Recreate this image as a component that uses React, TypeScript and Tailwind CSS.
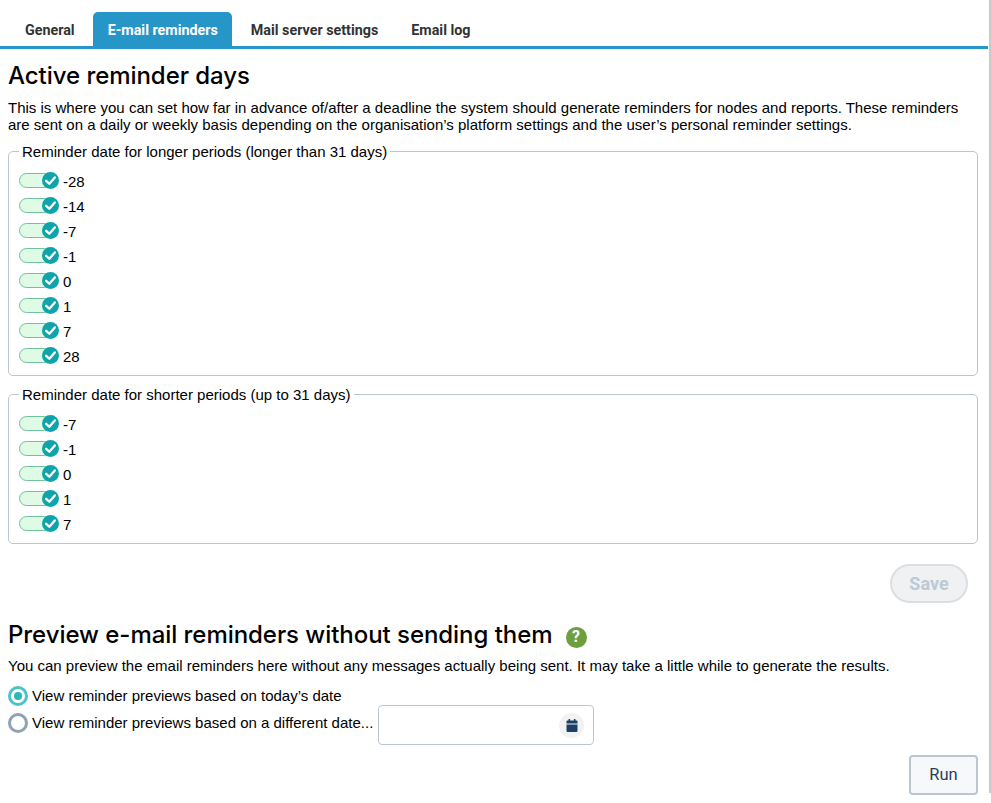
import React from 'react';

const longDays = [-28, -14, -7, -1, 0, 1, 7, 28];
const shortDays = [-7, -1, 0, 1, 7];
const tabs = ['General', 'E-mail reminders', 'Mail server settings', 'Email log'];

const ReminderToggle: React.FC<{ day: number }> = ({ day }) => (
  <div className="flex h-[25px] items-center">
    <span className="relative block h-[15px] w-[33px] -translate-y-[2px] rounded-full border border-[#6fc29c] bg-[#dffbe5]">
      <span className="absolute -right-[8px] -top-[2px] flex h-[17px] w-[17px] items-center justify-center rounded-full bg-[#0fa3ab]">
        <svg width="13" height="13" viewBox="0 0 12 12" fill="none">
          <path d="M2 6.3 L4.9 9 L10 3.2" stroke="#fff" strokeWidth="2.2" strokeLinecap="round" strokeLinejoin="round" />
        </svg>
      </span>
    </span>
    <span className="ml-[11px] text-[15px] text-black">{day}</span>
  </div>
);

const ReminderGroup: React.FC<{ title: string; days: number[]; className: string }> = ({ title, days, className }) => (
  <fieldset className={`rounded-[5px] border border-[#bcc6d0] pl-[10px] ${className}`}>
    <legend className="px-[3px] text-[15px] leading-[17px] text-black">{title}</legend>
    <div className="mt-[10px]">
      {days.map((day, i) => (
        <ReminderToggle key={i} day={day} />
      ))}
    </div>
  </fieldset>
);

export default function App() {
  return (
    <div className="relative h-[803px] w-[991px] overflow-hidden bg-white font-['Liberation_Sans',Arial,sans-serif] text-black">
      <div className="pr-[3px]">
        <div className="flex h-[49px] items-end gap-[4px] border-b-[3px] border-[#2695c8] pl-[10.5px]">
          {tabs.map((tab) => (
            <div
              key={tab}
              className={
                tab === 'E-mail reminders'
                  ? "flex h-[34px] items-center rounded-t-[5px] bg-[#2695c8] px-[14.5px] pt-[4px] font-['Roboto',sans-serif] text-[14.3px] font-bold text-white"
                  : "flex h-[34px] items-center px-[14.5px] pt-[4px] font-['Roboto',sans-serif] text-[14.3px] font-bold text-[#333]"
              }
            >
              {tab}
            </div>
          ))}
        </div>

        <div className="pl-[8px] pr-[10px]">
          <h1 className="mt-[12px] font-['Inter',sans-serif] text-[24px] font-medium leading-[30px] tracking-[-0.05px]">Active reminder days</h1>
          <p className="mt-[8px] text-[15px] leading-[17px]">
            This is where you can set how far in advance of/after a deadline the system should generate reminders for nodes and reports. These reminders
            <br />
            are sent on a daily or weekly basis depending on the organisation’s platform settings and the user’s personal reminder settings.
          </p>

          <ReminderGroup title="Reminder date for longer periods (longer than 31 days)" days={longDays} className="mt-[10px] h-[233px]" />
          <ReminderGroup title="Reminder date for shorter periods (up to 31 days)" days={shortDays} className="mt-[10px] h-[158px]" />

          <div className="mt-[20px] flex justify-end pr-[10px]">
            <button className="h-[39px] w-[78px] rounded-full border-2 border-[#dcdfe2] bg-[#f0f1f2] font-['Roboto',sans-serif] text-[18px] font-bold text-[#bcc9d6]">
              Save
            </button>
          </div>

          <div className="mt-[17px] flex items-center">
            <h2 className="font-['Inter',sans-serif] text-[24px] font-medium leading-[30px] tracking-[-0.05px]">Preview e-mail reminders without sending them</h2>
            <span className="ml-[13px] mt-[4px] flex h-[21px] w-[21px] items-center justify-center rounded-full bg-[#6f9e3f] font-['Roboto',sans-serif] text-[16px] font-bold leading-none text-white">?</span>
          </div>
          <p className="mt-[7px] text-[15px] leading-[17px]">
            You can preview the email reminders here without any messages actually being sent. It may take a little while to generate the results.
          </p>

          <div className="mt-[13px] flex h-[17px] items-center">
            <span className="flex h-[20px] w-[20px] shrink-0 items-center justify-center rounded-full border-[3px] border-[#4cc3c9] bg-white">
              <span className="h-[8px] w-[8px] rounded-full bg-[#2bb5bd]" />
            </span>
            <span className="ml-[4px] pt-[2px] text-[15px]">View reminder previews based on today’s date</span>
          </div>
          <div className="mt-[1px] flex h-[40px] items-start">
            <span className="mt-[8px] h-[20px] w-[20px] shrink-0 rounded-full border-[3px] border-[#8fa1b3] bg-white" />
            <span className="ml-[4px] mt-[9px] text-[15px] leading-[17px]">View reminder previews based on a different date...</span>
            <div className="ml-[5px] flex h-[40px] w-[216px] items-center justify-end rounded-[4px] border border-[#bcc6d0] pr-[9px]">
              <span className="flex h-[25px] w-[25px] items-center justify-center rounded-full bg-[#f0f2f4]">
                <svg width="12" height="13" viewBox="0 0 12 13" fill="#1d3f63">
                  <rect x="2.5" y="0" width="1.6" height="3" rx="0.5" />
                  <rect x="7.9" y="0" width="1.6" height="3" rx="0.5" />
                  <path d="M1.5 1.5h9a1 1 0 0 1 1 1V4.500H.5V2.500a1 1 0 0 1 1-1Z" />
                  <path d="M.5 5.500h11V12a1 1 0 0 1-1 1h-9a1 1 0 0 1-1-1Z" />
                </svg>
              </span>
            </div>
          </div>

          <div className="mt-[10px] flex justify-end">
            <button className="h-[40px] w-[69px] rounded-[4px] border-2 border-[#bcc6d0] bg-[#f7f8fb] font-['Roboto',sans-serif] text-[16.5px] text-[#2d3f55]">
              Run
            </button>
          </div>
        </div>
      </div>
      <div className="absolute right-0 top-0 h-[793px] w-[2px] bg-[#cacaca]" />
    </div>
  );
}
